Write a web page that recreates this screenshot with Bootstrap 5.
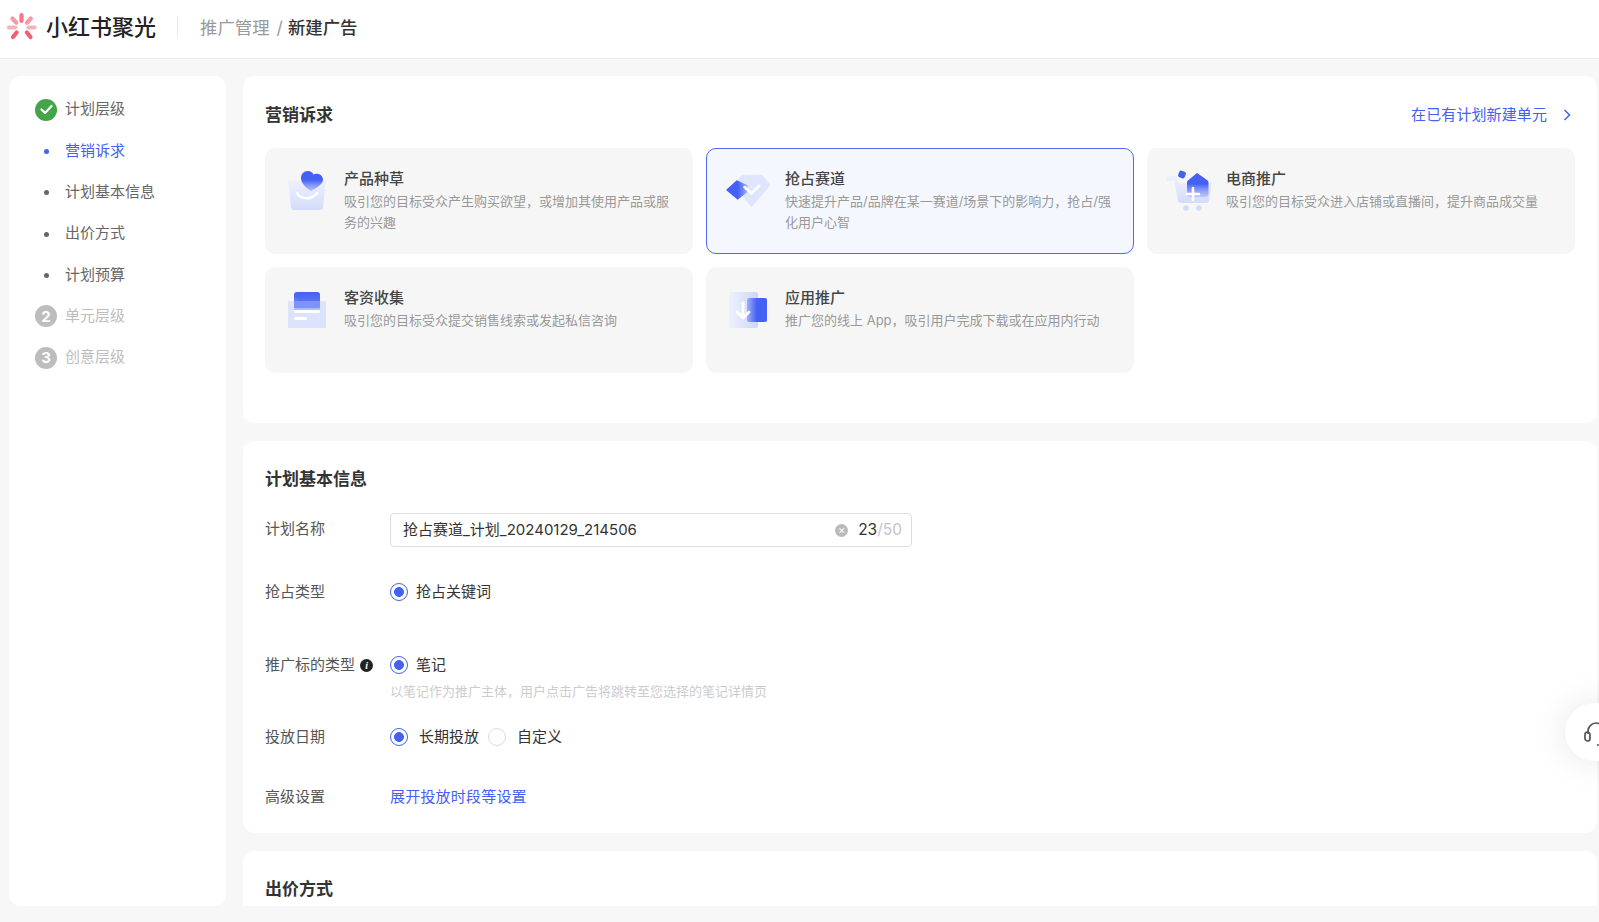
<!DOCTYPE html>
<html lang="zh-CN">
<head>
<meta charset="utf-8">
<title>小红书聚光</title>
<link href="https://cdn.jsdelivr.net/npm/bootstrap@5.3.0/dist/css/bootstrap.min.css" rel="stylesheet">
<style>
:root{--blue:#4460f5}
html,body{height:100%}
body{background:#f7f7f7;overflow:hidden;font-family:"Inter","Noto Sans CJK SC",sans-serif;font-size:15px;color:#333;position:relative}
.top-bar{height:59px;background:#fff;border-bottom:1px solid #efefef;padding:0 0 4px 6px}
.brand-name{font-size:22px;font-weight:500;color:#222;margin-left:8px;line-height:1}
.top-sep{width:1px;height:22px;background:#e8e8e8;margin:0 22px 0 21px}
.crumb{font-size:17.4px;color:#999;margin-top:2px}
.crumb b{font-weight:500;color:#333}
.crumb i{font-style:normal;margin:0 5px 0 7px}
.page-body{height:847px;padding:17px 2px 0 9px;gap:17px}
.side-panel{width:217px;flex:none;background:#fff;border-radius:12px;padding:13px 0 0 26px}
.step-item{height:41.33px;gap:8px;color:#666}
.step-mark{width:22px;height:22px;flex:none;border-radius:50%;background:#bdbdbd;color:#fff;font-weight:700;font-size:15px;line-height:1}
.step-mark.ok{background:#43a547}
.step-dot{width:22px;flex:none;text-align:center}
.step-dot span{display:inline-block;width:5px;height:5px;border-radius:50%;background:#666;vertical-align:middle}
.step-item.on{color:var(--blue)}
.step-item.on .step-dot span{background:var(--blue)}
.step-item.off{color:#bdbdbd}
.main-col{min-width:0;height:830px;overflow:hidden;gap:18px}
.panel{background:#fff;border-radius:12px;padding:0 22px;flex:none}
.panel-a{height:347px;padding-top:27px}
.panel-b{height:392px;padding-top:26px}
.panel-c{height:90px;padding-top:26px}
.panel-title{font-size:17px;font-weight:600;line-height:24px;color:#333;margin:0}
.top-link{color:var(--blue);text-decoration:none;font-size:15px;line-height:24px;gap:16px;letter-spacing:.1px}
.tile-grid{display:grid;grid-template-columns:repeat(3,428px);gap:13px;margin-top:21px}
.tile{height:106px;background:#f6f6f6;border-radius:10px;padding:19px 20px 0 22px;gap:16px;border:1px solid #f6f6f6}
.tile.sel{background:#f5f7fe;border-color:#4d69f2}
.tile svg{flex:none;margin-top:2px}
.tile-name{font-size:15px;font-weight:500;line-height:22px;color:#444;margin-bottom:1px}
.tile-desc{font-size:13px;line-height:21px;color:#999}
.f-label{width:125px;flex:none;color:#555;font-size:15px}
.name-box{width:522px;height:34px;border:1px solid #ddd;border-radius:4px;padding:0 9px 0 12px;font-size:15px;color:#333}
.name-input{border:0;outline:0;padding:0;background:none;font:inherit;color:inherit;min-width:0}
.x-mark{width:13px;height:13px;background:#bbb;border-radius:50%;color:#fff;font-size:11px;line-height:1;margin-right:10px}
.count-wrap{font-size:15.5px}
.count-now{color:#333}
.count-max{color:#c4c4c4}
.rd{width:18px;height:18px;margin:0;flex:none;border:1px solid #ddd;background-color:#fff;background-image:none}
.rd[type=radio]:checked{border:1.5px solid var(--blue);background-color:#fff;background-image:radial-gradient(circle,var(--blue) 0,var(--blue) 4.6px,transparent 5.2px)}
.hint-line{font-size:13px;color:#ccc;line-height:18px;padding-left:125px}
.info-i{width:13px;height:13px;border-radius:50%;background:#222;color:#fff;font:italic 700 10px/13px "Liberation Serif",serif;text-align:center;margin-left:5px;display:inline-block;vertical-align:1px}
.blue-link{color:var(--blue);text-decoration:none;letter-spacing:.2px}
.row-name{margin-top:22px;height:34px}
.row-name .f-label{margin-top:-2px}
.row-type{margin-top:28px;height:34px}
.row-target{margin-top:39px}
.row-target .f-label,.row-target .rd-row{height:34px}
.row-date{margin-top:20px;height:34px}
.row-more{margin-top:26px;height:34px}
.opt-a{margin:0 9px 0 11px}
.opt-b{margin-left:11px}
.float-help{position:absolute;left:1565px;top:703px;width:60px;height:58px;border-radius:50%;background:#fff;box-shadow:0 0 34px rgba(0,0,0,.1)}
.float-help svg{position:absolute;left:19px;top:18px}
</style>
</head>
<body>
<header class="top-bar d-flex align-items-center">
  <svg width="32" height="32" viewBox="0 0 32 32">
    <g stroke-width="4.2" stroke-linecap="round" fill="none">
      <path d="M15.500 4v6" stroke="#f67586"/><path d="M24.800 7.500l-3.800 4.200" stroke="#f89aa6"/><path d="M28.500 16.500h-6" stroke="#f9b0b9"/><path d="M24.500 26l-3.600-4.500" stroke="#ef5f75"/>
      <path d="M7 26l3.600-4.500" stroke="#ef5f75"/><path d="M3 16.500h6" stroke="#f9b0b9"/><path d="M6.500 7.500l3.800 4.200" stroke="#f89aa6"/>
    </g>
  </svg>
  <span class="brand-name">小红书聚光</span>
  <span class="top-sep"></span>
  <span class="crumb">推广管理<i>/</i><b>新建广告</b></span>
</header>

<div class="page-body d-flex">
  <nav class="side-panel">
    <div class="step-item d-flex align-items-center"><span class="step-mark ok d-flex align-items-center justify-content-center"><svg width="13" height="11" viewBox="0 0 13 11"><path d="M1.500 5.500l3.600 3.400 6.400-7" fill="none" stroke="#fff" stroke-width="2.200" stroke-linecap="round" stroke-linejoin="round"/></svg></span>计划层级</div>
    <div class="step-item on d-flex align-items-center"><span class="step-dot"><span></span></span>营销诉求</div>
    <div class="step-item d-flex align-items-center"><span class="step-dot"><span></span></span>计划基本信息</div>
    <div class="step-item d-flex align-items-center"><span class="step-dot"><span></span></span>出价方式</div>
    <div class="step-item d-flex align-items-center"><span class="step-dot"><span></span></span>计划预算</div>
    <div class="step-item off d-flex align-items-center"><span class="step-mark d-flex align-items-center justify-content-center">2</span>单元层级</div>
    <div class="step-item off d-flex align-items-center"><span class="step-mark d-flex align-items-center justify-content-center">3</span>创意层级</div>
  </nav>

  <main class="main-col flex-grow-1 d-flex flex-column">
    <section class="panel panel-a">
      <div class="d-flex align-items-center justify-content-between" style="padding-right:4px">
        <h2 class="panel-title">营销诉求</h2>
        <a class="top-link d-flex align-items-center" href="#">在已有计划新建单元<svg width="8" height="12" viewBox="0 0 8 12"><path d="M1.500 1l5 5-5 5" fill="none" stroke="#4460f5" stroke-width="1.500"/></svg></a>
      </div>
      <div class="tile-grid">
        <div class="tile d-flex">
          <svg width="40" height="42" viewBox="0 0 40 42">
            <defs>
              <linearGradient id="lav" x1="0" y1="0" x2="0" y2="1"><stop offset="0" stop-color="#eef1fe"/><stop offset="1" stop-color="#d3dcfb"/></linearGradient>
              <linearGradient id="hrt" x1="0" y1="0" x2="0" y2="1"><stop offset=".45" stop-color="#4460f5"/><stop offset="1" stop-color="#8ea1f8" stop-opacity=".55"/></linearGradient>
            </defs>
            <path d="M0 10h38l-3 27a3 3 0 0 1-3 3H6a3 3 0 0 1-3-3z" fill="url(#lav)"/>
            <path d="M13 8c0-4 3-7 6.500-7 3 0 5 1.500 6 3.500 1-.5 2-.7 3-.7C32.500 3.800 35 6.500 35 10c0 4-8 9-12 11-5-3-10-8-10-13z" fill="url(#hrt)"/>
            <path d="M9 23c4 7 15 7 20 0" fill="none" stroke="#fff" stroke-width="2.400" stroke-linecap="round"/>
          </svg>
          <div><div class="tile-name">产品种草</div><div class="tile-desc">吸引您的目标受众产生购买欲望，或增加其使用产品或服务的兴趣</div></div>
        </div>
        <div class="tile sel d-flex">
          <svg width="46" height="42" viewBox="0 0 46 42" style="width:45px;margin-left:-4px;margin-right:-1px">
            <defs><linearGradient id="dmd" x1="0" y1="0" x2="1" y2="0"><stop offset="0" stop-color="#4460f5"/><stop offset=".55" stop-color="#4460f5"/><stop offset="1" stop-color="#9fb0fa"/></linearGradient></defs>
            <path d="M17 5h21l8 10-19 22-17-22z" fill="#dfe5fc" stroke="#dfe5fc" stroke-width="1" stroke-linejoin="round"/>
            <path d="M1 20l11-10 11 5v7l-10 8z" fill="url(#dmd)"/>
            <path d="M20 17l7 6.500 8-8" fill="none" stroke="#fff" stroke-width="2.800" stroke-linecap="round"/>
          </svg>
          <div><div class="tile-name">抢占赛道</div><div class="tile-desc">快速提升产品/品牌在某一赛道/场景下的影响力，抢占/强化用户心智</div></div>
        </div>
        <div class="tile d-flex">
          <svg width="46" height="42" viewBox="0 0 46 42" style="margin-left:-4px;margin-right:-2px">
            <defs><linearGradient id="hse" x1="0" y1="0" x2="0" y2="1"><stop offset=".45" stop-color="#4460f5"/><stop offset="1" stop-color="#a7b5fa" stop-opacity=".6"/></linearGradient></defs>
            <path d="M2 6h6c2 0 3 1 3.500 3l1 4H46l-3 17a3 3 0 0 1-3 3H15a3 3 0 0 1-3-3L8 11H2a2.500 2.500 0 0 1 0-5z" fill="url(#lav)"/>
            <rect x="12.500" y="1" width="7" height="7" rx="2" fill="#4460f5" transform="rotate(20 16 4.500)"/>
            <path d="M31 3l10 7c1 .7 1.500 1.500 1.500 3v11c0 2-1 3-3 3H24c-2 0-3-1-3-3V13c0-1.500.5-2.300 1.500-3z" fill="url(#hse)"/>
            <path d="M27 18v12M21 24h12" stroke="#fff" stroke-width="2.600" stroke-linecap="round"/>
            <circle cx="20" cy="38" r="2.800" fill="#d3dcfb"/><circle cx="33" cy="38" r="2.800" fill="#d3dcfb"/>
          </svg>
          <div><div class="tile-name">电商推广</div><div class="tile-desc">吸引您的目标受众进入店铺或直播间，提升商品成交量</div></div>
        </div>
        <div class="tile d-flex">
          <svg width="40" height="42" viewBox="0 0 40 42">
            <defs><linearGradient id="fold" x1="0" y1="0" x2="0" y2="1"><stop offset="0" stop-color="#4460f5"/><stop offset="1" stop-color="#6d84f7"/></linearGradient></defs>
            <rect x="6" y="3" width="26" height="17" rx="3" fill="url(#fold)"/>
            <path d="M0 12h38v27H0z" fill="#dbe2fc" opacity=".95"/>
            <path d="M6 9h3l2 3h21v7H6z" fill="#5f78f6"/>
            <path d="M6 12h26v9H6z" fill="#92a5f9" opacity=".6"/>
            <rect x="6" y="21" width="26" height="3" rx="1.500" fill="#fff"/><rect x="6" y="28" width="13" height="3" rx="1.500" fill="#fff"/>
          </svg>
          <div><div class="tile-name">客资收集</div><div class="tile-desc">吸引您的目标受众提交销售线索或发起私信咨询</div></div>
        </div>
        <div class="tile d-flex">
          <svg width="40" height="42" viewBox="0 0 40 42">
            <defs><linearGradient id="app" x1="0" y1="0" x2="1" y2="0"><stop offset="0" stop-color="#eef1fe"/><stop offset="1" stop-color="#ccd6fb"/></linearGradient>
            <linearGradient id="app2" x1="0" y1="0" x2="1" y2="0"><stop offset="0" stop-color="#9fb0fa"/><stop offset=".5" stop-color="#4460f5"/></linearGradient></defs>
            <rect x="0" y="3" width="29" height="36" rx="2" fill="url(#app)"/>
            <rect x="18" y="9" width="20" height="24" rx="2" fill="url(#app2)"/>
            <path d="M14 14v15M8 23l6 6 6-6" fill="none" stroke="#fff" stroke-width="2.800" stroke-linecap="round" stroke-linejoin="round"/>
          </svg>
          <div><div class="tile-name">应用推广</div><div class="tile-desc">推广您的线上 App，吸引用户完成下载或在应用内行动</div></div>
        </div>
      </div>
    </section>

    <section class="panel panel-b">
      <h2 class="panel-title">计划基本信息</h2>
      <div class="row-name d-flex align-items-center">
        <div class="f-label">计划名称</div>
        <div class="name-box d-flex align-items-center">
          <input class="name-input flex-grow-1" value="抢占赛道_计划_20240129_214506" aria-label="计划名称">
          <span class="x-mark d-flex align-items-center justify-content-center">×</span>
          <span class="count-wrap"><span class="count-now">23</span><span class="count-max">/50</span></span>
        </div>
      </div>
      <div class="row-type d-flex align-items-center">
        <div class="f-label">抢占类型</div>
        <div class="d-flex align-items-center gap-2"><input class="form-check-input rd" type="radio" name="t1" checked><span>抢占关键词</span></div>
      </div>
      <div class="row-target">
        <div class="d-flex align-items-center">
          <div class="f-label d-flex align-items-center">推广标的类型<span class="info-i">i</span></div>
          <div class="rd-row d-flex align-items-center gap-2"><input class="form-check-input rd" type="radio" name="t2" checked><span>笔记</span></div>
        </div>
        <div class="hint-line">以笔记作为推广主体，用户点击广告将跳转至您选择的笔记详情页</div>
      </div>
      <div class="row-date d-flex align-items-center">
        <div class="f-label">投放日期</div>
        <div class="d-flex align-items-center">
          <input class="form-check-input rd" type="radio" name="t3" checked><span class="opt-a">长期投放</span>
          <input class="form-check-input rd" type="radio" name="t3"><span class="opt-b">自定义</span>
        </div>
      </div>
      <div class="row-more d-flex align-items-center">
        <div class="f-label">高级设置</div>
        <a class="blue-link" href="#">展开投放时段等设置</a>
      </div>
    </section>

    <section class="panel panel-c">
      <h2 class="panel-title">出价方式</h2>
    </section>
  </main>
</div>

<div class="float-help">
  <svg width="28" height="28" viewBox="0 0 28 28"><path d="M4 13V10C4 5.500 8 2 12 2s8 3.500 8 8v3" fill="none" stroke="#555" stroke-width="1.700"/><rect x="1" y="11" width="5" height="9" rx="2.500" fill="none" stroke="#555" stroke-width="1.700"/><path d="M19 20c-1 3-3 4-6 4" fill="none" stroke="#555" stroke-width="1.700"/></svg>
</div>
<script src="https://cdn.jsdelivr.net/npm/bootstrap@5.3.0/dist/js/bootstrap.bundle.min.js"></script>
</body>
</html>
